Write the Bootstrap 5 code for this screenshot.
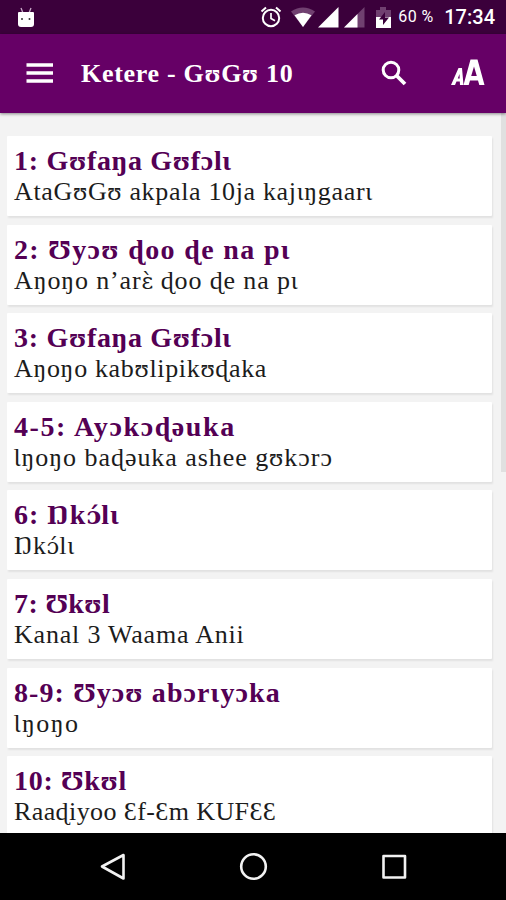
<!DOCTYPE html>
<html lang="blo">
<head>
<meta charset="utf-8">
<meta name="viewport" content="width=device-width, initial-scale=1">
<title>Ketere - GʊGʊ 10</title>
<link rel="stylesheet" href="https://cdn.jsdelivr.net/npm/bootstrap@5.3.0/dist/css/bootstrap.min.css">
<style>
body{font-family:"Liberation Serif","DejaVu Serif",serif;background:#f3f3f3;color:#1c1c1c}
.screen{height:900px;width:506px}
.status{height:34px;background:#3b003b;font-family:Roboto,sans-serif;padding:0 11px 0 17px}
.appbar{height:78.5px;background:#660066;box-shadow:0 1px 3px rgba(0,0,0,.45);z-index:2;padding:0 21px 0 26px}
.app-title{font-size:26px;letter-spacing:.7px;line-height:30px;margin-left:27px;padding-top:2px}
.entries{padding:23.5px 14px 0 6.5px;gap:8.6px;background:#f3f3f3}
.entry{height:80px;background:#fff;border-radius:1px;box-shadow:1px 2px 2px rgba(0,0,0,.07);padding:10px 8px 0 7.5px}
.entry h2{font-size:28px;line-height:30px;color:#540054;letter-spacing:.7px}
.entry p{font-size:26px;line-height:30px;letter-spacing:.66px;padding-top:1px}
.entry:nth-child(2) h2{letter-spacing:1.35px}
.entry:nth-child(2) p{letter-spacing:.87px}
.entry:nth-child(4) h2{letter-spacing:1.6px}
.entry:nth-child(4) p{letter-spacing:.95px}
.entry:nth-child(5) h2{letter-spacing:1px}
.entry:nth-child(6) h2{letter-spacing:.4px}
.entry:nth-child(6) p{letter-spacing:.8px}
.entry:nth-child(7) h2{letter-spacing:1.1px}
.entry:nth-child(7) p{letter-spacing:1.4px}
.entry:nth-child(8) p{letter-spacing:.4px}
.entry .accented{font-family:"DejaVu Serif",serif;font-size:.87em;line-height:1;letter-spacing:0}
.thumb{right:0;top:0;width:5px;height:359px;background:#e0e0e0}
.navkeys{height:67px;background:#000}
.gap-alarm{margin-right:9px}
.gap-wifi{margin-right:3px}
.gap-signal{margin-right:5px}
.gap-sim{margin-right:11px}
.batt{font-size:16px;margin-left:8px;width:46px;letter-spacing:.4px;line-height:20px}
.clock{font-size:20px;line-height:20px}
.status-icons{margin-right:-1px}
.gap-search{margin-right:44px}
</style>
</head>
<body>
<div class="screen d-flex flex-column overflow-hidden">
<div class="status d-flex align-items-center text-white flex-shrink-0">
<svg width="18" height="21" viewBox="0 0 18 21"><path d="M4 1l2 5M14 1l-2 5" stroke="#c9a9c9" stroke-width="1.3"/><path d="M2 5h14q1 0 1 1v11q0 3-3 3H4q-3 0-3-3V6q0-1 1-1z" fill="#fff"/><circle cx="5" cy="12" r="1" fill="#333"/><circle cx="12.500" cy="12" r="1" fill="#333"/></svg>
<div class="status-icons ms-auto d-flex align-items-center">
<svg class="flex-shrink-0 gap-alarm" width="22" height="22" viewBox="0 0 22 22" fill="none" stroke="#fff" stroke-width="2"><circle cx="11" cy="12" r="8.200"/><path d="M11 7v5.500l4 2.300" stroke-width="1.700"/><path d="M1.500 5.500l4.500-4M20.500 5.500l-4.500-4"/></svg>
<svg class="flex-shrink-0 gap-wifi" width="24" height="20" viewBox="0 0 24 20"><path d="M0 4.500Q12-3.500 24 4.500L12 20z" fill="#704070"/><path d="M3.500 8.300Q12 3 20.500 8.300L12 20z" fill="#fff"/></svg>
<svg class="flex-shrink-0 gap-signal" width="21" height="21" viewBox="0 0 21 21"><path d="M20.500 0v20.500H0z" fill="#fff"/></svg>
<svg class="flex-shrink-0 gap-sim" width="21" height="21" viewBox="0 0 21 21"><path d="M20.500 0v20.500H0z" fill="#704070"/><path d="M13.500 7v13.500H0z" fill="#fff"/></svg>
<svg class="flex-shrink-0" width="15" height="21" viewBox="0 0 15 21"><path d="M0 3h4V0h6v3h5v18H0z" fill="#704070"/><path d="M0 10h15v11H0z" fill="#fff"/><path d="M9 5l-6 7.500h4V18l6-7.500H9z" fill="#3b003b"/></svg>
</div>
<span class="batt text-nowrap">60 %</span>
<span class="clock fw-medium">17:34</span>
</div>
<nav class="appbar d-flex align-items-center text-white flex-shrink-0 position-relative">
<svg width="28" height="20" viewBox="0 0 28 20"><path d="M.500 2h26.500M.500 10h26.500M.500 18h26.500" stroke="#fff" stroke-width="3.400"/></svg>
<h1 class="app-title fw-bold mb-0 text-nowrap">Ketere - GʊGʊ 10</h1>
<svg class="ms-auto gap-search" width="26" height="26" viewBox="0 0 26 26" fill="none" stroke="#fff"><circle cx="10" cy="10" r="7.800" stroke-width="3"/><path d="M15.500 15.500l8.500 8.500" stroke-width="3.800"/></svg>
<svg width="34" height="28" viewBox="0 0 34 28" fill="#fff" fill-rule="evenodd"><path d="M0 26L7.500 9h3.500L12.500 26H9L8.800 22.500H5.500L4 26zM6.800 19.500h1.900L8.500 15z"/><path d="M12.500 26L19.500 .500h7L33.500 26H28.300L27 21.500H19L17.700 26zM20.200 17h5.600L23 7.500z"/></svg>
</nav>
<main class="entries d-flex flex-column flex-grow-1 overflow-hidden position-relative">
<article class="entry flex-shrink-0"><h2 class="fw-bold mb-0">1: Gʊfaŋa Gʊfɔlɩ</h2><p class="mb-0">AtaGʊGʊ akpala 10ja kajɩŋgaarɩ</p></article>
<article class="entry flex-shrink-0"><h2 class="fw-bold mb-0">2: Ʊyɔʊ ɖoo ɖe na pɩ</h2><p class="mb-0">Aŋoŋo n’ar<span class="accented">ɛ̀</span> ɖoo ɖe na pɩ</p></article>
<article class="entry flex-shrink-0"><h2 class="fw-bold mb-0">3: Gʊfaŋa Gʊfɔlɩ</h2><p class="mb-0">Aŋoŋo kabʊlipikʊɖaka</p></article>
<article class="entry flex-shrink-0"><h2 class="fw-bold mb-0">4-5: Ayɔkɔɖəuka</h2><p class="mb-0">Ɩŋoŋo baɖəuka ashee gʊkɔrɔ</p></article>
<article class="entry flex-shrink-0"><h2 class="fw-bold mb-0">6: Ŋk<span class="accented">ɔ́</span>lɩ</h2><p class="mb-0">Ŋk<span class="accented">ɔ́</span>lɩ</p></article>
<article class="entry flex-shrink-0"><h2 class="fw-bold mb-0">7: Ʊkʊl</h2><p class="mb-0">Kanal 3 Waama Anii</p></article>
<article class="entry flex-shrink-0"><h2 class="fw-bold mb-0">8-9: Ʊyɔʊ abɔrɩyɔka</h2><p class="mb-0">Ɩŋoŋo</p></article>
<article class="entry flex-shrink-0"><h2 class="fw-bold mb-0">10: Ʊkʊl</h2><p class="mb-0">Raaɖiyoo Ɛf-Ɛm KUFƐƐ</p></article>
<div class="thumb position-absolute"></div>
</main>
<footer class="navkeys flex-shrink-0 d-flex justify-content-center align-items-center">
<svg width="506" height="67" viewBox="0 0 506 67" fill="none" stroke="#f2f2f2" stroke-width="2.600" stroke-linejoin="round"><path d="M102 33.500L123.500 22v23.500z"/><circle cx="253.500" cy="33.500" r="12.300"/><rect x="383.500" y="23" width="21.500" height="21.500"/></svg>
</footer>
</div>
<script src="https://cdn.jsdelivr.net/npm/bootstrap@5.3.0/dist/js/bootstrap.bundle.min.js"></script>
</body>
</html>
